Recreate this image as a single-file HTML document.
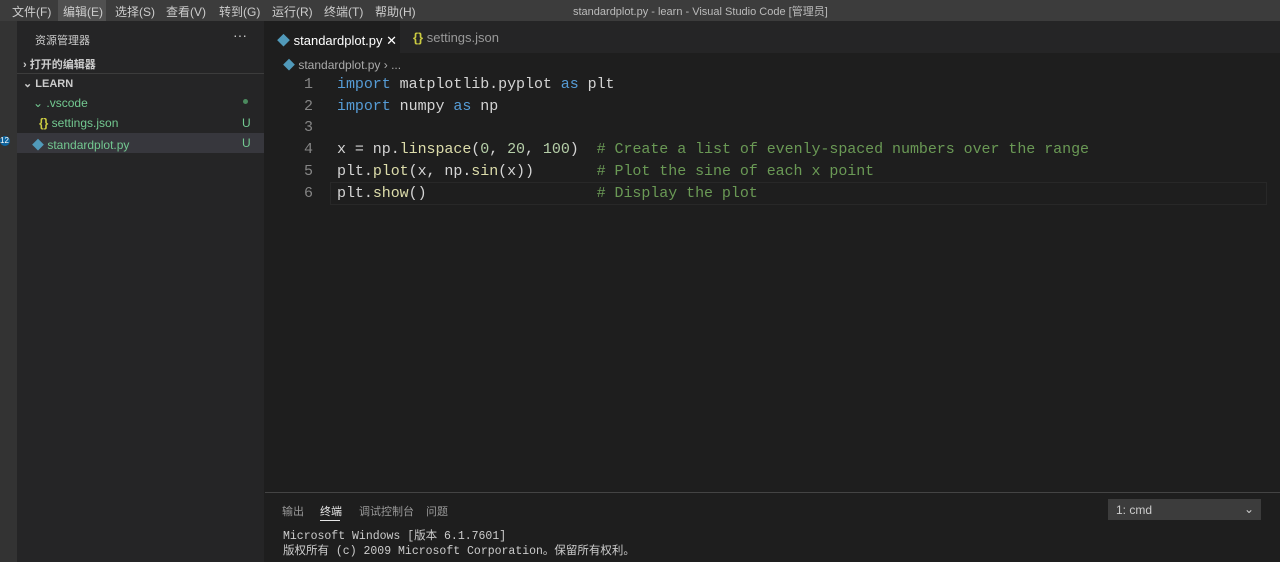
<!DOCTYPE html><html><head><meta charset="utf-8"><style>
body{margin:0;width:1280px;height:562px;background:#1e1e1e;overflow:hidden;font-family:"Liberation Sans","Noto Sans CJK SC",sans-serif;position:relative;color:#ccc}
.abs{position:absolute}
.title{left:0;top:0;width:1280px;height:21px;background:#3c3c3c;font-size:12px;color:#ccc}
.menu span{position:absolute;top:3px}
.side{left:17px;top:21px;width:247px;height:541px;background:#252526;font-size:12px}
.act{left:0;top:21px;width:17px;height:541px;background:#333}
.tabs{left:265px;top:21px;width:1015px;height:32px;background:#252526}
.code{font-family:"Liberation Mono",monospace;font-size:15px;letter-spacing:-0.05px;white-space:pre;line-height:21.7px}
.k{color:#569cd6}.c{color:#6a9955}.n{color:#b5cea8}.f{color:#dcdcaa}
.ln{color:#858585;text-align:right;width:48px}
</style></head><body>
<div class="abs title"><div class="menu">
<span style="left:12px">文件(F)</span><span style="left:58px;top:0;height:21px;width:48px;background:#505050"></span><span style="left:63px">编辑(E)</span><span style="left:115px">选择(S)</span><span style="left:166px">查看(V)</span><span style="left:219px">转到(G)</span><span style="left:272px">运行(R)</span><span style="left:324px">终端(T)</span><span style="left:375px">帮助(H)</span>
<span style="left:573px;font-size:11px;color:#bbb">standardplot.py - learn - Visual Studio Code [管理员]</span></div></div>
<div class="abs act"><div class="abs" style="left:0;top:115px;width:10px;height:10px;border-radius:5px;background:#0e639c;font-size:8px;color:#fff">12</div></div>
<div class="abs side">
<div class="abs" style="left:18px;top:11px;font-size:11px">资源管理器</div>
<div class="abs" style="left:216px;top:6px;font-size:14px">···</div>
<div class="abs" style="left:6px;top:35px;font-weight:bold;font-size:11px">› 打开的编辑器</div>
<div class="abs" style="left:0;top:52px;width:247px;height:1px;background:#3c3c3c"></div>
<div class="abs" style="left:6px;top:56px;font-weight:bold;font-size:11px">⌄ LEARN</div>
<div class="abs" style="left:16px;top:75px;color:#73c991">⌄ .vscode</div>
<div class="abs" style="left:226px;top:78px;width:5px;height:5px;border-radius:3px;background:#4b8a5e"></div>
<div class="abs" style="left:22px;top:95px;color:#73c991"><span style="color:#cbcb41;font-weight:bold">{}</span> settings.json</div>
<div class="abs" style="left:225px;top:95px;color:#73c991">U</div>
<div class="abs" style="left:0;top:112px;width:247px;height:20px;background:#37373d"></div>
<div class="abs" style="left:15px;top:115px;color:#73c991"><span style="color:#519aba">◆</span> standardplot.py</div>
<div class="abs" style="left:225px;top:115px;color:#73c991">U</div>
</div>
<div class="abs tabs">
<div class="abs" style="left:0;top:0;width:135px;height:32px;background:#1e1e1e;font-size:13px;color:#fff"><span class="abs" style="left:12px;top:9px"><span style="color:#519aba">◆</span> standardplot.py ✕</span></div>
<div class="abs" style="left:148px;top:9px;font-size:13px;color:#999"><span style="color:#cbcb41;font-weight:bold">{}</span> settings.json</div>
</div>
<div class="abs" style="left:283px;top:56px;font-size:12px;color:#aaa"><span style="color:#519aba">◆</span> standardplot.py › ...</div>
<div class="abs" style="left:330px;top:182px;width:935px;height:21px;border:1px solid #282828"></div>
<div class="abs code ln" style="left:265px;top:74px">1
2
3
4
5
6</div>
<div class="abs code" style="left:337px;top:74px;color:#d4d4d4"><span class="k">import</span> matplotlib.pyplot <span class="k">as</span> plt
<span class="k">import</span> numpy <span class="k">as</span> np

x = np.<span class="f">linspace</span>(<span class="n">0</span>, <span class="n">20</span>, <span class="n">100</span>)  <span class="c"># Create a list of evenly-spaced numbers over the range</span>
plt.<span class="f">plot</span>(x, np.<span class="f">sin</span>(x))       <span class="c"># Plot the sine of each x point</span>
plt.<span class="f">show</span>()                   <span class="c"># Display the plot</span></div>
<div class="abs" style="left:265px;top:492px;width:1015px;height:1px;background:#444"></div>
<div class="abs" style="left:282px;top:503px;font-size:11px;color:#999">输出</div>
<div class="abs" style="left:320px;top:503px;font-size:11px;color:#e7e7e7">终端</div>
<div class="abs" style="left:320px;top:520px;width:20px;height:1px;background:#e7e7e7"></div>
<div class="abs" style="left:359px;top:503px;font-size:11px;color:#999">调试控制台</div>
<div class="abs" style="left:426px;top:503px;font-size:11px;color:#999">问题</div>
<div class="abs" style="left:1108px;top:499px;width:153px;height:21px;background:#3c3c3c;font-size:12px"><span class="abs" style="left:8px;top:4px">1: cmd</span><span class="abs" style="left:136px;top:3px">⌄</span></div>
<div class="abs" style="left:283px;top:529px;font-family:'Liberation Mono','Noto Sans CJK SC',monospace;font-size:11.5px;line-height:15px;white-space:pre;color:#ccc">Microsoft Windows [版本 6.1.7601]
版权所有 (c) 2009 Microsoft Corporation。保留所有权利。</div>
</body></html>
